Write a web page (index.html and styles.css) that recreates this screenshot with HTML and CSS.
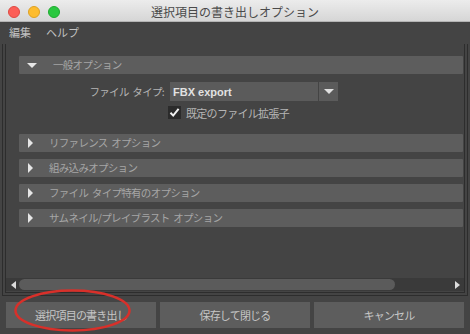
FILE: index.html
```html
<!DOCTYPE html>
<html lang="ja">
<head>
<meta charset="utf-8">
<link rel="stylesheet" href="styles.css">
</head>
<body>
<div class="window">
  <div class="titlebar">
    <div class="lights">
      <span class="light red"></span>
      <span class="light yellow"></span>
      <span class="light green"></span>
    </div>
    <div class="title">選択項目の書き出しオプション</div>
  </div>
  <div class="menubar">
    <span class="menu">編集</span>
    <span class="menu">ヘルプ</span>
  </div>
  <div class="scroll-outer">
    <div class="scroll-inner">
      <div class="content">
        <div class="frame">
          <div class="frame-head">
            <span class="tri-down"></span>
            <span class="frame-label">一般オプション</span>
          </div>
          <div class="frame-body">
            <div class="field-row">
              <span class="field-label">ファイル タイプ:</span>
              <div class="combo">
                <span class="combo-value">FBX export</span>
              </div>
              <div class="combo-btn"><span class="combo-arrow"></span></div>
            </div>
            <div class="check-row">
              <span class="checkbox">
                <svg width="13" height="13" viewBox="0 0 13 13"><path d="M2.5 6.8 L5.2 9.6 L10.6 2.8" fill="none" stroke="#f2f2f2" stroke-width="2"/></svg>
              </span>
              <span class="check-label">既定のファイル拡張子</span>
            </div>
          </div>
        </div>
        <div class="frame-head">
          <span class="tri-right"></span>
          <span class="frame-label">リファレンス オプション</span>
        </div>
        <div class="frame-head">
          <span class="tri-right"></span>
          <span class="frame-label">組み込みオプション</span>
        </div>
        <div class="frame-head">
          <span class="tri-right"></span>
          <span class="frame-label">ファイル タイプ特有のオプション</span>
        </div>
        <div class="frame-head">
          <span class="tri-right"></span>
          <span class="frame-label">サムネイル/プレイブラスト オプション</span>
        </div>
      </div>
      <div class="hscroll">
        <span class="arrow-left"></span>
        <div class="track"><div class="thumb"></div></div>
        <span class="arrow-right"></span>
      </div>
    </div>
  </div>
  <div class="buttons">
    <div class="btn">選択項目の書き出し</div>
    <div class="btn">保存して閉じる</div>
    <div class="btn">キャンセル</div>
  </div>
  <svg class="annotation" width="470" height="334" viewBox="0 0 470 334">
    <ellipse cx="72.5" cy="310.5" rx="57" ry="20" fill="none" stroke="#d8302a" stroke-width="2.5"/>
  </svg>
</div>
</body>
</html>
```

FILE: styles.css
```css
* { box-sizing: border-box; }
html, body { margin: 0; padding: 0; }
body {
  width: 470px;
  height: 334px;
  overflow: hidden;
  font-family: "Noto Sans CJK JP", "Noto Sans", sans-serif;
  background: #444444;
}
.window {
  position: relative;
  width: 470px;
  height: 334px;
  display: flex;
  flex-direction: column;
  background: #444444;
}
.titlebar {
  position: relative;
  height: 22px;
  flex: none;
  background: linear-gradient(#ececec, #d6d6d6);
  border-bottom: 1px solid #b4b4b4;
  display: flex;
  align-items: center;
  justify-content: center;
}
.lights {
  position: absolute;
  left: 8px;
  top: 6px;
  display: flex;
  gap: 8px;
}
.light {
  width: 12px;
  height: 12px;
  border-radius: 50%;
}
.red { background: #fc5f57; border: 0.5px solid #de4a42; }
.yellow { background: #fdbc2e; border: 0.5px solid #dea123; }
.green { background: #2ac840; border: 0.5px solid #1eab2f; }
.title {
  font-size: 12px;
  color: #4a4a4a;
  padding-top: 2px;
}
.menubar {
  height: 18px;
  flex: none;
  display: flex;
  align-items: center;
  gap: 15px;
  padding-left: 9px;
  padding-top: 1px;
  font-size: 11px;
  color: #c2c2c2;
}
.scroll-outer {
  margin: 4px 2px 0 2px;
  height: 252px;
  flex: none;
  border: 1px solid #2d2d2d;
  border-top: none;
  padding: 0 2px 2px 2px;
}
.scroll-inner {
  height: 100%;
  border: 1px solid #2d2d2d;
  border-top: none;
  display: flex;
  flex-direction: column;
  overflow: hidden;
}
.content {
  flex: 1;
  padding: 12px 1px 0 13px;
  display: flex;
  flex-direction: column;
  gap: 7px;
}
.frame { display: flex; flex-direction: column; }
.frame-head {
  height: 18px;
  background: #5d5d5d;
  display: flex;
  align-items: center;
  border-radius: 1px;
}
.frame-label {
  font-size: 10.5px;
  color: #a6a6a6;
  letter-spacing: -0.7px;
  word-spacing: 2px;
  margin-left: 16px;
  margin-top: -1px;
}
.tri-down {
  width: 0; height: 0;
  margin-left: 8px;
  border-left: 5px solid transparent;
  border-right: 5px solid transparent;
  border-top: 5px solid #e6e6e6;
}
.tri-right {
  width: 0; height: 0;
  margin-left: 9px;
  border-top: 5px solid transparent;
  border-bottom: 5px solid transparent;
  border-left: 5.5px solid #e6e6e6;
}
.tri-right + .frame-label { margin-left: 16px; }
.frame-body {
  height: 53px;
  padding-top: 8px;
  display: flex;
  flex-direction: column;
  gap: 5px;
}
.field-row {
  display: flex;
  align-items: center;
  height: 19px;
}
.field-label {
  width: 146px;
  text-align: right;
  font-size: 10.5px;
  color: #b5b5b5;
  letter-spacing: -0.7px;
  word-spacing: 2px;
  padding-right: 1px;
}
.combo {
  margin-left: 5px;
  width: 148px;
  height: 19px;
  background: #5b5b5b;
  display: flex;
  align-items: center;
  padding-left: 3px;
}
.combo-value {
  font-family: "Liberation Sans", Arial, sans-serif;
  font-weight: bold;
  font-size: 11px;
  color: #e2e2e2;
}
.combo-btn {
  margin-left: 1px;
  width: 19px;
  height: 19px;
  background: #5b5b5b;
  display: flex;
  align-items: center;
  justify-content: center;
}
.combo-arrow {
  width: 0; height: 0;
  border-left: 5px solid transparent;
  border-right: 5px solid transparent;
  border-top: 5px solid #e0e0e0;
}
.check-row {
  display: flex;
  align-items: center;
  height: 13px;
  margin-left: 149px;
}
.checkbox {
  width: 13px;
  height: 13px;
  background: #2b2b2b;
  display: flex;
}
.check-label {
  margin-left: 5px;
  font-size: 11px;
  color: #b5b5b5;
  letter-spacing: -0.7px;
}
.hscroll {
  height: 13px;
  flex: none;
  margin-bottom: 1px;
  display: flex;
  align-items: center;
  background: #3a3a3a;
  padding: 0 4px 0 5px;
}
.arrow-left {
  width: 0; height: 0;
  border-top: 4.5px solid transparent;
  border-bottom: 4.5px solid transparent;
  border-right: 5px solid #dcdcdc;
}
.arrow-right {
  width: 0; height: 0;
  border-top: 4.5px solid transparent;
  border-bottom: 4.5px solid transparent;
  border-left: 5px solid #dcdcdc;
}
.track {
  flex: 1;
  height: 11px;
  margin: 0 6px 0 3px;
}
.thumb {
  width: 376px;
  height: 11px;
  border-radius: 6px;
  background: #5b5b5b;
}
.buttons {
  margin-top: 6px;
  padding: 0 6px;
  display: flex;
  gap: 4px;
  height: 26px;
  flex: none;
}
.btn {
  flex: 1;
  background: #5d5d5d;
  display: flex;
  align-items: center;
  justify-content: center;
  font-size: 11px;
  color: #c6c6c6;
  letter-spacing: -0.8px;
}
.annotation {
  position: absolute;
  left: 0;
  top: 0;
  pointer-events: none;
}
```
